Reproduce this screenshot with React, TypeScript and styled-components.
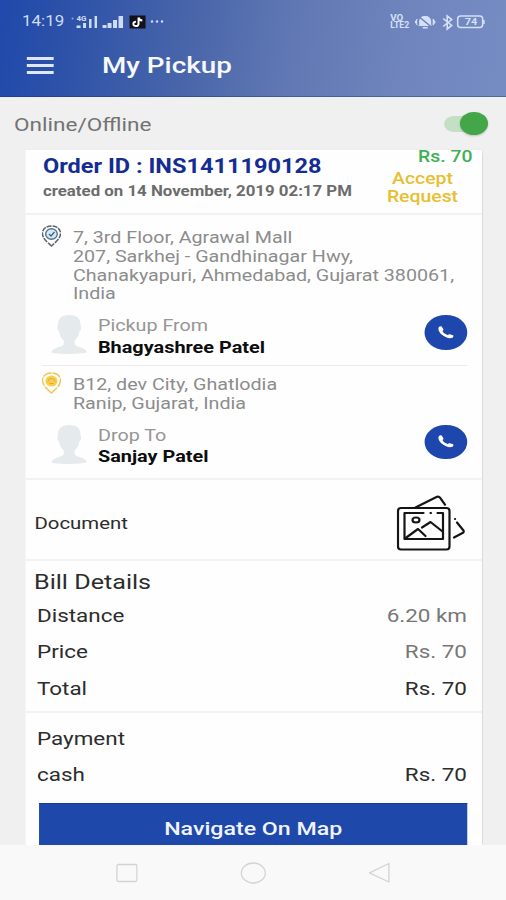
import React from 'react';
import styled, { createGlobalStyle } from 'styled-components';

// The display is anamorphic: content is laid out narrow and widened by STRETCH.
const STRETCH = 1.22;
const u = (x: number) => `${(x / STRETCH).toFixed(3)}px`;

const GlobalStyle = createGlobalStyle`
  * { box-sizing: border-box; }
  html, body { margin: 0; width: 506px; height: 900px; overflow: hidden; background: #f0f0f0; }
  svg { display: block; flex: none; }
`;

const Screen = styled.div`
  width: ${u(506)};
  height: 900px;
  display: flex;
  flex-direction: column;
  transform: scaleX(${STRETCH});
  transform-origin: 0 0;
  background: #f0f0f1;
  font-family: Roboto, 'Liberation Sans', sans-serif;
  color: #2c2c2c;
  white-space: nowrap;
`;

const Header = styled.header`
  height: 97px;
  flex: none;
  background: linear-gradient(97deg, #1f49ab 0%, #2c51a8 13%, #4a66aa 38%, #5f77b3 56%, #7085bd 80%, #758cc3 100%);
  border-bottom: 1px solid rgba(20, 50, 130, 0.4);
`;

const StatusBar = styled.div`
  height: 34px;
  padding: 9px ${u(21)} 0 ${u(22)};
  display: flex;
  align-items: center;
  justify-content: space-between;
  color: #cfdcf6;
`;

const StatusGroup = styled.div`
  display: flex;
  align-items: center;
`;

const Clock = styled.span`
  width: ${u(48)};
  font-size: 13.9px;
  line-height: 25px;
`;

const AppBar = styled.div`
  height: 62px;
  padding: 2px 0 0 ${u(26.5)};
  display: flex;
  align-items: center;
`;

const MenuButton = styled.button`
  width: ${u(27)};
  height: 17px;
  margin: 0 ${u(48.5)} 2px 0;
  padding: 0;
  border: 0;
  background: none;
  display: flex;
  flex-direction: column;
  justify-content: space-between;
`;

const MenuBar = styled.span`
  width: 100%;
  height: 3px;
  background: #dfe8fa;
`;

const Title = styled.h1`
  margin: 0;
  font-size: 22.8px;
  font-weight: 500;
  line-height: 30px;
  color: #f6f9ff;
`;

const AvailabilityRow = styled.div`
  height: 53px;
  flex: none;
  padding: 2px ${u(18)} 0 ${u(14)};
  display: flex;
  align-items: center;
  justify-content: space-between;
  font-size: 18.5px;
  color: #737373;
`;

const Switch = styled.span`
  width: ${u(44)};
  height: 16px;
  margin-bottom: 2px;
  border-radius: 8px;
  background: #c3e0c4;
  display: flex;
  align-items: center;
  justify-content: flex-end;
`;

const Thumb = styled.span`
  width: ${u(28.5)};
  height: 23.4px;
  border-radius: 50%;
  background: #43a648;
  box-shadow: 0 1px 2px rgba(0, 0, 0, 0.2);
`;

const Card = styled.main`
  flex: 1;
  min-height: 0;
  width: ${u(455.5)};
  margin-left: ${u(26)};
  padding-top: 1px;
  overflow: hidden;
  background: #fefefe;
  box-shadow: 1px 0 1px #dcdcdc;
`;

const Section = styled.section<{ $height: number }>`
  height: ${(p) => p.$height}px;
  border-bottom: 2px solid #f2f2f2;
`;

const OrderSection = styled(Section)`
  display: flex;
  justify-content: space-between;
  padding-left: ${u(17)};
`;

const OrderInfo = styled.div`
  padding-top: 4px;
`;

const OrderId = styled.h2`
  margin: 0;
  font-size: 19.3px;
  font-weight: 700;
  line-height: 24px;
  color: #142c93;
`;

const Created = styled.div`
  margin-top: 2px;
  font-size: 13.8px;
  font-weight: 700;
  line-height: 20px;
  color: #6c6c6c;
`;

const OrderAside = styled.div`
  width: ${u(100)};
  margin-right: ${u(9)};
  font-size: 15.9px;
  font-weight: 500;
`;

const Fare = styled.div`
  line-height: 12px;
  text-align: right;
  color: #3fb054;
`;

const AcceptLink = styled.div`
  margin-top: 6.7px;
  line-height: 18.8px;
  text-align: center;
  color: #e8be31;
`;

const Stop = styled.div<{ $height: number; $top: number }>`
  height: ${(p) => p.$height}px;
  margin: 0 ${u(14.5)} 0 ${u(15)};
  padding-top: ${(p) => p.$top}px;
  & + & { border-top: 1px solid #ececec; }
`;

const AddressRow = styled.div`
  display: flex;
  align-items: flex-start;
  gap: ${u(12)};
  font-size: 16.15px;
  line-height: 18.75px;
  color: #8c8c8c;

  svg { margin-top: -4px; }
`;

const ContactRow = styled.div`
  margin-top: 11px;
  padding-left: ${u(10)};
  display: flex;
  align-items: flex-start;

  svg { margin-top: 0; }
`;

const ContactText = styled.div`
  flex: 1;
  padding-left: ${u(11)};
  font-size: 16.2px;
  line-height: 21.8px;
  color: #969696;
`;

const ContactName = styled.div`
  font-size: 16.3px;
  font-weight: 700;
  color: #0d0d0d;
`;

const CallButton = styled.button`
  width: ${u(42.2)};
  height: 34.6px;
  padding: 0;
  border: 0;
  border-radius: 50%;
  background: #1d47ac;
  display: flex;
  align-items: center;
  justify-content: center;
`;

const DocumentSection = styled(Section)`
  padding: 7px ${u(17)} 0 ${u(8.5)};
  display: flex;
  align-items: center;
  justify-content: space-between;
  font-size: 16.7px;
`;

const BillSection = styled(Section)`
  padding: 7px ${u(14.5)} 0 ${u(11)};
`;

const BillTitle = styled.h3`
  margin: 0 0 0 ${u(-3)};
  font-size: 20.6px;
  font-weight: 400;
  line-height: 29px;
`;

const LineItem = styled.div`
  height: 36.5px;
  display: flex;
  align-items: center;
  justify-content: space-between;
  font-size: 18.4px;
`;

const Amount = styled.span<{ $muted?: boolean }>`
  color: ${(p) => (p.$muted ? '#777' : '#2c2c2c')};
`;

const PaymentSection = styled.section`
  padding: 7px ${u(14.5)} 0 ${u(11)};
`;

const NavigateButton = styled.button`
  width: ${u(428.5)};
  height: 50px;
  margin: 10px 0 0 ${u(2)};
  padding: 0;
  border: 0;
  border-top: 1px solid #123b9b;
  background: #1f48ab;
  color: #f0f4ff;
  font: 500 19px/49px Roboto, 'Liberation Sans', sans-serif;
`;

const SystemNav = styled.nav`
  height: 55px;
  flex: none;
  padding: 0 ${u(115.5)};
  display: flex;
  align-items: center;
  justify-content: space-between;
  background: #f9f9f9;
`;

const SignalIcons = () => (
  <svg width={u(96)} height="16" viewBox="0 0 96 16" preserveAspectRatio="none" fill="#cfdcf6">
    <circle cx="3" cy="4.5" r="1" opacity=".6" />
    <text x="7" y="7.5" fontSize="8" fontWeight="700" textLength="10" lengthAdjust="spacingAndGlyphs">4G</text>
    <path d="M7 11.5h4V14H7zM13.500 9h3v5h-3zM19.500 5h2.500v9h-2.500zM25 2h2.500v12H25z" />
    <path d="M33 11h4v3h-4zM38 9h4v5h-4zM43.500 6h4v8h-4zM49 2h4.500v12H49z" />
    <rect x="60" y="1.500" width="16" height="13" fill="#11111b" />
    <g fill="none" stroke="#fff" strokeWidth="2">
      <path d="M69 3.500v6.300a2.600 2.200 0 1 1-2.600-2.100M69 3.500c.3 2 1.500 2.900 3.800 3" />
    </g>
    <circle cx="82.500" cy="7.500" r="1.200" />
    <circle cx="87.500" cy="7.500" r="1.200" />
    <circle cx="92.500" cy="7.500" r="1.200" />
  </svg>
);

const DeviceIcons = () => (
  <svg width={u(96)} height="18" viewBox="0 0 96 18" preserveAspectRatio="none" fill="#d5e0f8">
    <text x="1" y="8" fontSize="8.500" fontWeight="700" textLength="13" lengthAdjust="spacingAndGlyphs">VO</text>
    <text x="1" y="15.500" fontSize="9" fontWeight="700" textLength="19" lengthAdjust="spacingAndGlyphs">LTE2</text>
    <path d="M30 12.500v-4C30 5 32.500 3 36 3s6 2 6 5.500v4l2 .5H28zM33.500 14h5v1.500h-5z" />
    <path d="M28 6l-2 3 2 3M44 6l2 3-2 3z" fill="#d5e0f8" stroke="#d5e0f8" strokeWidth="1" />
    <path d="M29.500 3.500L43.500 15" stroke="#6b81bb" strokeWidth="1.500" />
    <path d="M54 5.500l8.500 7L58 16V3l4.500 3.500-8.500 7" fill="none" stroke="#d5e0f8" strokeWidth="1.600" />
    <rect x="68.500" y="3" width="25" height="11.400" rx="3" fill="none" stroke="#d5e0f8" strokeWidth="1.500" />
    <path d="M94 7h1.500v4H94z" />
    <text x="75.500" y="12.200" fontSize="9.500" fontWeight="700" textLength="12.500" lengthAdjust="spacingAndGlyphs">74</text>
  </svg>
);

const PickupPin = () => (
  <svg width={u(20)} height="22" viewBox="0 0 20 22" preserveAspectRatio="none" fill="none">
    <path d="M10 21C7 18 1 14 1 8.500 1 4 4.500 1 10 1s9 3 9 7.500C19 14 13 18 10 21z" stroke="#5b646c" strokeWidth="1.500" strokeDasharray="5 1" />
    <ellipse cx="10" cy="9" rx="5.800" ry="5.300" fill="#d5e9f5" stroke="#54748d" strokeWidth="1.400" />
    <path d="M7.500 9l2 2 3.500-4" stroke="#41637e" strokeWidth="1.300" />
  </svg>
);

const DropPin = () => (
  <svg width={u(20)} height="22" viewBox="0 0 20 22" preserveAspectRatio="none" fill="none">
    <path d="M10 21C7 18 1 14 1 8.500 1 4 4.500 1 10 1s9 3 9 7.500C19 14 13 18 10 21z" stroke="#e9c653" strokeWidth="1.400" strokeDasharray="9 1" />
    <ellipse cx="10" cy="9" rx="6" ry="5.500" fill="#f8cf4d" />
    <path d="M6.500 9.500a3.500 3 0 0 1 7 0M8 11.500h4" stroke="#e0a93a" strokeWidth="1" />
  </svg>
);

const Avatar = () => (
  <svg width={u(36)} height="39" viewBox="0 0 36 39" preserveAspectRatio="none" fill="#e5ebec">
    <path d="M18 0C9.500 0 6.500 4 6.800 10.500c-1.300.5-.8 5 .9 5.800C8.500 21 10 23.500 12.500 25.500c.5 3.500 0 4.800-3 6C5 33 1 34 0 37.500c5 2 31 2 36 0C35 34 31 33 26.500 31.500c-3-1.200-3.500-2.500-3-6 2.500-2 4-4.500 4.800-9.200 1.700-.8 2.200-5.300.9-5.800C29.500 4 26.500 0 18 0z" />
  </svg>
);

const PhoneIcon = () => (
  <svg width={u(16)} height="13" viewBox="0 0 16 13" preserveAspectRatio="none" fill="#fff">
    <path d="M.8 1.200C1.600.3 3 0 3.800.8L5.400 3.200c.4.900-.7 1.500-.7 2.100.5 1.500 2.900 3.100 4.900 3.600.9.100 1.300-.8 2.300-.7l3.100 1c1 .5.600 1.700-.5 2.500C9.500 14 .2 7.700.4 2.600z" />
  </svg>
);

const DocumentIcon = () => (
  <svg width={u(68)} height="56" viewBox="0 0 68 56" preserveAspectRatio="none" fill="none" stroke="#151515" strokeWidth="2.200" strokeLinecap="round" strokeLinejoin="round">
    <rect x="1.500" y="13" width="51.500" height="41.500" rx="3" />
    <path d="M27 18H8v26h38.500V18H41M34 18h.5" />
    <ellipse cx="19.500" cy="25" rx="3.500" ry="2.500" />
    <path d="M8.500 43.500L21.500 34l7.500 7M25.500 32.500L34 27l12 9.500" />
    <path d="M19 12.500L40.500 1.800c1.500-.7 2.200-.2 3 .8l5 7M58.500 24h.1M60.500 27.500L67 35.500c.7 1 .4 1.700-.5 2.200L57.500 42.500" />
  </svg>
);

const RecentsIcon = () => (
  <svg width={u(22)} height="22" viewBox="0 0 22 22" preserveAspectRatio="none" fill="none" stroke="#d3d3d3" strokeWidth="1.300">
    <rect x="1" y="2.500" width="20" height="17" rx="1.500" />
  </svg>
);

const HomeIcon = () => (
  <svg width={u(26)} height="22" viewBox="0 0 26 22" preserveAspectRatio="none" fill="none" stroke="#d3d3d3" strokeWidth="1.300">
    <ellipse cx="13" cy="11" rx="12" ry="10" />
  </svg>
);

const BackIcon = () => (
  <svg width={u(22)} height="22" viewBox="0 0 22 22" preserveAspectRatio="none" fill="none" stroke="#d3d3d3" strokeWidth="1.300" strokeLinejoin="round">
    <path d="M20.500 1.500v18.500L1 10.800z" />
  </svg>
);

interface ContactProps {
  label: string;
  name: string;
}

const Contact = ({ label, name }: ContactProps) => (
  <ContactRow>
    <Avatar />
    <ContactText>
      {label}
      <ContactName>{name}</ContactName>
    </ContactText>
    <CallButton aria-label={`Call ${name}`}>
      <PhoneIcon />
    </CallButton>
  </ContactRow>
);

export default function App() {
  return (
    <>
      <GlobalStyle />
      <Screen>
        <Header>
          <StatusBar>
            <StatusGroup>
              <Clock>14:19</Clock>
              <SignalIcons />
            </StatusGroup>
            <DeviceIcons />
          </StatusBar>
          <AppBar>
            <MenuButton aria-label="Menu">
              <MenuBar />
              <MenuBar />
              <MenuBar />
            </MenuButton>
            <Title>My Pickup</Title>
          </AppBar>
        </Header>

        <AvailabilityRow>
          Online/Offline
          <Switch>
            <Thumb />
          </Switch>
        </AvailabilityRow>

        <Card>
          <OrderSection $height={64}>
            <OrderInfo>
              <OrderId>Order ID : INS1411190128</OrderId>
              <Created>created on 14 November, 2019 02:17 PM</Created>
            </OrderInfo>
            <OrderAside>
              <Fare>Rs. 70</Fare>
              <AcceptLink>
                Accept
                <br />
                Request
              </AcceptLink>
            </OrderAside>
          </OrderSection>

          <Section $height={265}>
            <Stop $height={150} $top={14}>
              <AddressRow>
                <PickupPin />
                <div>
                  7, 3rd Floor, Agrawal Mall
                  <br />
                  207, Sarkhej - Gandhinagar Hwy,
                  <br />
                  Chanakyapuri, Ahmedabad, Gujarat 380061,
                  <br />
                  India
                </div>
              </AddressRow>
              <Contact label="Pickup From" name="Bhagyashree Patel" />
            </Stop>
            <Stop $height={113} $top={10}>
              <AddressRow>
                <DropPin />
                <div>
                  B12, dev City, Ghatlodia
                  <br />
                  Ranip, Gujarat, India
                </div>
              </AddressRow>
              <Contact label="Drop To" name="Sanjay Patel" />
            </Stop>
          </Section>

          <DocumentSection $height={81}>
            Document
            <DocumentIcon />
          </DocumentSection>

          <BillSection $height={152}>
            <BillTitle>Bill Details</BillTitle>
            <LineItem>
              Distance
              <Amount $muted>6.20 km</Amount>
            </LineItem>
            <LineItem>
              Price
              <Amount $muted>Rs. 70</Amount>
            </LineItem>
            <LineItem>
              Total
              <Amount>Rs. 70</Amount>
            </LineItem>
          </BillSection>

          <PaymentSection>
            <LineItem>Payment</LineItem>
            <LineItem>
              cash
              <Amount>Rs. 70</Amount>
            </LineItem>
            <NavigateButton>Navigate On Map</NavigateButton>
          </PaymentSection>
        </Card>

        <SystemNav>
          <RecentsIcon />
          <HomeIcon />
          <BackIcon />
        </SystemNav>
      </Screen>
    </>
  );
}
